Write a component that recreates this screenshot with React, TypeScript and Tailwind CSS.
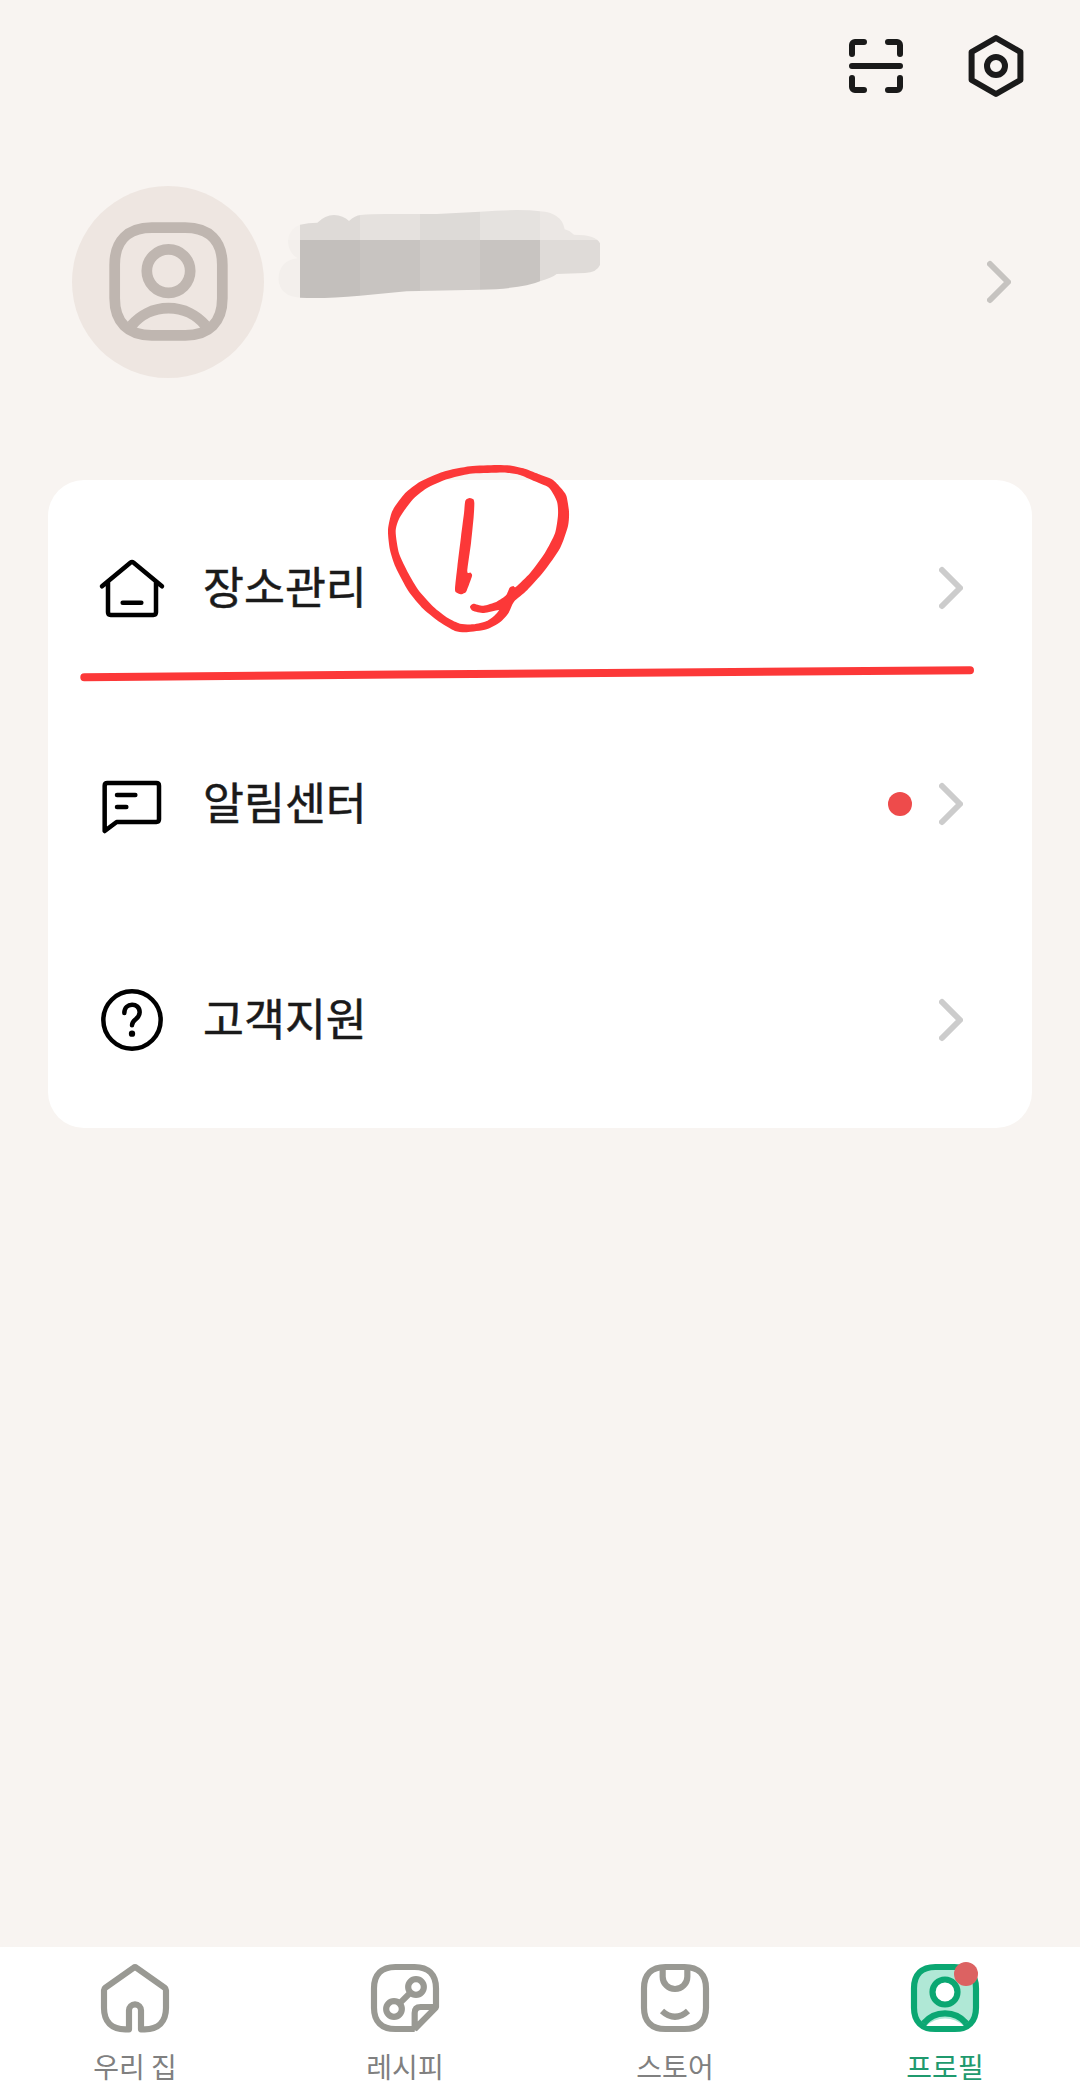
import type { ReactNode } from "react";

type Point = [number, number];

/** Closed, lightly rounded curve through the given points. */
function smooth(pts: Point[]): string {
  const n = pts.length;
  const t = 9;
  let d = `M${pts[0][0]} ${pts[0][1]}`;
  for (let i = 0; i < n; i++) {
    const a = pts[(i - 1 + n) % n];
    const b = pts[i];
    const c = pts[(i + 1) % n];
    const e = pts[(i + 2) % n];
    d += `C${b[0] + (c[0] - a[0]) / t} ${b[1] + (c[1] - a[1]) / t} ${c[0] - (e[0] - b[0]) / t} ${c[1] - (e[1] - b[1]) / t} ${c[0]} ${c[1]}`;
  }
  return d + "Z";
}

const LOOP_OUTER: Point[] = [
  [409, 75], [455, 77], [490, 85], [535, 102], [578, 119], [602, 143], [619, 167], [627, 215], [624, 258],
  [600, 325], [552, 394], [502, 450], [462, 485], [445, 520], [420, 547], [380, 568], [320, 577], [285, 573],
  [240, 547], [190, 507], [145, 453], [107, 382], [90, 330], [84, 270], [97, 213], [135, 160],
  [180, 125], [250, 95], [330, 79],
];

const LOOP_INNER: Point[] = [
  [409, 98], [330, 101], [260, 118], [200, 145], [155, 182], [118, 235], [107, 275], [117, 340],
  [145, 400], [175, 450], [220, 500], [265, 535], [300, 551], [340, 553], [380, 543], [403, 527],
  [416, 510], [372, 519], [338, 512], [330, 500], [340, 491], [370, 497], [410, 485], [438, 466],
  [449, 443], [460, 438], [468, 440], [511, 398], [555, 338], [585, 280], [594, 225], [591, 185],
  [567, 143], [520, 122], [480, 105], [440, 98],
];

const DIGIT: Point[] = [
  [316, 182], [329, 174], [340, 178], [343, 190], [341, 230], [333, 310], [322, 394], [332, 398], [336, 408],
  [320, 452], [312, 460], [302, 463], [288, 457], [285, 445], [292, 380], [303, 290], [312, 220],
];

/** Rounded square outline shared by the person and store icons. */
const SQUIRCLE =
  "M132 175C132 134 155 111 196 111H254C295 111 318 134 318 175V233C318 274 295 297 254 297H196C155 297 132 274 132 233Z";

function ScanIcon() {
  return (
    <svg className="size-[72px]" viewBox="0 0 24 24" fill="none" stroke="#1a1a1a" strokeWidth="2" strokeLinecap="round">
      <path d="M4 8V5a1 1 0 0 1 1-1h3M16 4h3a1 1 0 0 1 1 1v3M20 16v3a1 1 0 0 1-1 1h-3M8 20H5a1 1 0 0 1-1-1v-3M4 12h16" />
    </svg>
  );
}

function SettingsIcon() {
  return (
    <svg className="size-[72px]" viewBox="0 0 72 72" fill="none" stroke="#1a1a1a" strokeWidth="6" strokeLinejoin="round">
      <path d="M36 8 60.4 22V50L36 64 11.6 50V22Z" />
      <circle cx="36" cy="36" r="9" />
    </svg>
  );
}

function Chevron({ color }: { color: string }) {
  return (
    <svg className="h-12 w-6" viewBox="0 0 24 48" fill="none" stroke={color} strokeWidth="6" strokeLinecap="round" strokeLinejoin="round">
      <path d="M3 6 21 24 3 42" />
    </svg>
  );
}

function PersonIcon({ className, color, fill, badge }: { className: string; color: string; fill?: string; badge?: boolean }) {
  return (
    <svg className={className} viewBox="117 96 216 216" fill="none" stroke={color} strokeWidth="18.5">
      <path d={SQUIRCLE} fill={fill ?? "none"} />
      {fill && <path d="M168 288A83 83 0 0 1 282 288Z" fill="#fff" stroke="none" />}
      <circle cx="225" cy="186" r="37.5" fill={fill ? "#fff" : "none"} />
      <path d="M161 280A83.500 83.500 0 0 1 289 280" />
      {badge && <circle cx="288" cy="132" r="36" fill="#dc6262" stroke="none" />}
    </svg>
  );
}

function HomeTabIcon() {
  return (
    <svg className="size-[72px]" viewBox="117 96 216 216" fill="none" stroke="#999993" strokeWidth="18.5" strokeLinejoin="round">
      <path d="M207 298V241a18 18 0 0 1 36 0V298H254C295 298 318 275 318 234V181q0-5-4-8L229 113q-4-3-8 0L136 173q-4 3-4 8V234C132 275 155 298 196 298Z" />
    </svg>
  );
}

function RecipeIcon() {
  return (
    <svg className="size-[72px]" viewBox="117 96 216 216" fill="none" stroke="#999993" strokeWidth="18.500">
      <path strokeLinejoin="bevel" d="M254 297H196C155 297 132 274 132 233V175C132 134 155 111 196 111H254C295 111 318 134 318 175V232L254 297V249q0-18 18-18H318" />
      <circle cx="258" cy="171" r="23.500" />
      <circle cx="192" cy="237" r="23.500" />
      <path d="M208 221 242 187" />
    </svg>
  );
}

function StoreIcon() {
  return (
    <svg className="size-[72px]" viewBox="117 96 216 216" fill="none" stroke="#999993" strokeWidth="18.500">
      <path d={SQUIRCLE} />
      <path d="M188 111V140a37 37 0 0 0 74 0V111M186 243Q225 278 264 243" />
    </svg>
  );
}

function HouseIcon() {
  return (
    <svg className="size-[72px]" viewBox="78 66 216 216" fill="none" stroke="#000" strokeWidth="13.5" strokeLinecap="round" strokeLinejoin="round">
      <path d="M96 169 181 98q5-4 10 0L276 169M114 156V247q0 8 8 8H250q8 0 8-8V156M158 218.500H214" />
    </svg>
  );
}

function MessageIcon() {
  return (
    <svg className="size-[72px]" viewBox="78 54 216 216" fill="none" stroke="#000" strokeWidth="13.5" strokeLinecap="round" strokeLinejoin="round">
      <path d="M104 243V107q0-8 8-8H259q8 0 8 8V208q0 8-8 8H140ZM141 135H196M141 171H169" />
    </svg>
  );
}

function HelpIcon() {
  return (
    <svg className="size-[72px]" viewBox="78 72 216 216" fill="none" stroke="#000" strokeWidth="13.5" strokeLinecap="round">
      <circle cx="186" cy="180" r="86" />
      <path d="M163 159C163 126 209 126 209 157C209 179 186 176 186 196" />
      <circle cx="186" cy="221" r="9.500" fill="#000" stroke="none" />
    </svg>
  );
}

function RedactedName() {
  return (
    <svg className="-ml-1 mt-1 h-[130px] w-[360px] self-start" viewBox="0 0 1080 390" role="img" aria-label="이름">
      <defs>
        <clipPath id="smudge">
          <path d="M120 104Q145 98 172 98Q195 76 222 75Q250 76 267 93Q285 76 302 75Q340 71 400 72H530L660 65Q780 56 840 64Q905 68 914 118Q928 121 942 134Q1010 134 1020 160V225Q1010 248 975 249L890 252Q875 264 840 274Q790 296 660 299L440 304L300 317Q190 327 120 323Q60 320 55 268Q58 210 113 205Q83 188 84 150Q88 115 120 104Z" />
        </clipPath>
      </defs>
      <g clipPath="url(#smudge)" shapeRendering="crispEdges">
        <path fill="#f5f1ee" d="M0 0h120v150H0z" />
        <path fill="#f3efec" d="M0 150h120v240H0z" />
        <path fill="#dedad7" d="M120 0h180v150H120z" />
        <path fill="#e5e1de" d="M300 0h180v150H300z" />
        <path fill="#dddad7" d="M480 0h180v150H480z" />
        <path fill="#e5e2df" d="M660 0h180v150H660z" />
        <path fill="#ebe7e4" d="M840 0h240v150H840z" />
        <path fill="#c3bfbc" d="M120 150h180v240H120z" />
        <path fill="#c8c4c1" d="M300 150h180v240H300z" />
        <path fill="#cfcbc8" d="M480 150h180v240H480z" />
        <path fill="#c8c4c1" d="M660 150h180v240H660z" />
        <path fill="#dfdbd8" d="M840 150h240v240H840z" />
      </g>
    </svg>
  );
}

function MenuRow({ icon, label, dot }: { icon: ReactNode; label: string; dot?: boolean }) {
  return (
    <button className="flex h-[216px] w-full items-center pl-12 pr-[69px]">
      {icon}
      <span className="ml-[35px] pb-[5px] text-[44.5px] leading-none text-[#1a1a1a] [-webkit-text-stroke:0.5px_#1a1a1a]">{label}</span>
      <span className="ml-auto flex items-center gap-[27px]">
        {dot && <span className="size-6 rounded-full bg-[#ee4b4b]" />}
        <Chevron color="#cccccc" />
      </span>
    </button>
  );
}

function Tab({ icon, label, active }: { icon: ReactNode; label: string; active?: boolean }) {
  return (
    <button className="flex flex-1 flex-col items-center pt-[15px]">
      {icon}
      <span className={`mt-[18px] text-[28px] leading-[28px] ${active ? "text-[#1f9a6e]" : "text-[#808080]"}`}>{label}</span>
    </button>
  );
}

function Annotations() {
  return (
    <svg className="pointer-events-none absolute inset-0 size-full overflow-visible" viewBox="0 0 984 648">
      <g transform="translate(312 -40) scale(0.33333)" fill="#fc3838">
        <path fillRule="evenodd" d={smooth(LOOP_OUTER) + smooth(LOOP_INNER)} />
        <path d={smooth(DIGIT)} />
      </g>
      <path d="M36.300 197.300 350 194.500 922 190.300" fill="none" stroke="#fc3838" strokeWidth="8" strokeLinecap="round" />
    </svg>
  );
}

export default function App() {
  return (
    <div className="flex h-[2097px] w-[1080px] flex-col bg-[#f8f4f1] font-['Noto_Sans_CJK_KR',sans-serif]">
      <header className="flex justify-end gap-12 px-12 pt-[30px]">
        <ScanIcon />
        <SettingsIcon />
      </header>

      <section className="mt-[84px] flex h-48 items-center pl-[72px] pr-[69px]">
        <div className="flex size-48 items-center justify-center rounded-full bg-[#eee6e1] pb-[2px]">
          <PersonIcon className="size-[125px]" color="#bfb6b0" />
        </div>
        <RedactedName />
        <div className="ml-auto">
          <Chevron color="#c6c3c0" />
        </div>
      </section>

      <main className="relative mx-12 mt-[102px] rounded-[36px] bg-white">
        <MenuRow icon={<HouseIcon />} label="장소관리" />
        <MenuRow icon={<MessageIcon />} label="알림센터" dot />
        <MenuRow icon={<HelpIcon />} label="고객지원" />
        <Annotations />
      </main>

      <nav className="mt-auto flex h-[150px] bg-white">
        <Tab icon={<HomeTabIcon />} label="우리 집" />
        <Tab icon={<RecipeIcon />} label="레시피" />
        <Tab icon={<StoreIcon />} label="스토어" />
        <Tab icon={<PersonIcon className="size-[72px]" color="#0ba772" fill="#b0e8d6" badge />} label="프로필" active />
      </nav>
    </div>
  );
}
